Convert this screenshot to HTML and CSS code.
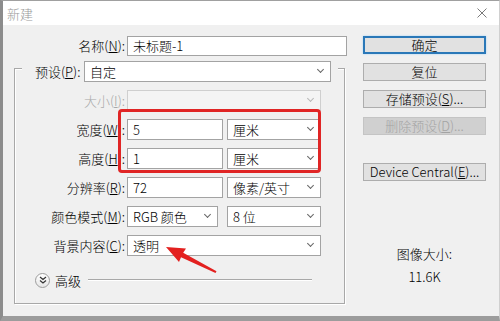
FILE: index.html
```html
<!DOCTYPE html>
<html lang="zh-CN">
<head>
  <meta charset="UTF-8" />
  <title>新建</title>
  <link rel="stylesheet" href="styles.css">
</head>
<body>
  <div class="window">
    <div class="titlebar">
      <span class="title">新建</span>
      <svg class="close" width="10" height="10" viewBox="0 0 10 10" aria-hidden="true">
        <path d="M0.5 0.5 L9.5 9.5 M9.5 0.5 L0.5 9.5" stroke="#7a7a7a" stroke-width="1" fill="none" />
      </svg>
    </div>

    <div class="content">
      <div class="left">
        <div class="name-row">
          <label class="label">名称(<u>N</u>):</label>
          <div class="field name-field">未标题-1</div>
        </div>

        <div class="group">
          <div class="preset-row">
            <label class="preset-label">预设(<u>P</u>):</label>
            <div class="select preset-select">自定<span class="chev"></span></div>
          </div>

          <div class="rows">
            <div class="row disabled">
              <label class="label">大小(<u>I</u>):</label>
              <div class="select wide"><span class="chev"></span></div>
            </div>
            <div class="row">
              <label class="label">宽度(<u>W</u>):</label>
              <div class="field small">5</div>
              <div class="select unit">厘米<span class="chev"></span></div>
            </div>
            <div class="row">
              <label class="label">高度(<u>H</u>):</label>
              <div class="field small">1</div>
              <div class="select unit">厘米<span class="chev"></span></div>
            </div>
            <div class="row">
              <label class="label">分辨率(<u>R</u>):</label>
              <div class="field small">72</div>
              <div class="select unit">像素/英寸<span class="chev"></span></div>
            </div>
            <div class="row">
              <label class="label">颜色模式(<u>M</u>):</label>
              <div class="select mode">RGB 颜色<span class="chev"></span></div>
              <div class="select unit">8 位<span class="chev"></span></div>
            </div>
            <div class="row">
              <label class="label">背景内容(<u>C</u>):</label>
              <div class="select wide">透明<span class="chev"></span></div>
            </div>
          </div>

          <div class="advanced">
            <span class="adv-btn">
              <svg width="8" height="8" viewBox="0 0 8 8" aria-hidden="true">
                <path d="M1 1 L4 3.5 L7 1 M1 4.5 L4 7 L7 4.5" stroke="#333" stroke-width="1.2" fill="none" />
              </svg>
            </span>
            <span class="adv-text">高级</span>
            <span class="adv-line"></span>
          </div>
        </div>
      </div>

      <div class="right">
        <button class="btn default">确定</button>
        <button class="btn">复位</button>
        <button class="btn">存储预设(<u>S</u>)...</button>
        <button class="btn" disabled>删除预设(<u>D</u>)...</button>
        <button class="btn device">Device Central(<u>E</u>)...</button>
        <div class="image-size">
          <p>图像大小:</p>
          <p>11.6K</p>
        </div>
      </div>
    </div>

    <!-- annotations drawn over the dialog -->
    <div class="highlight"></div>
    <svg class="arrow" width="500" height="321" viewBox="0 0 500 321" aria-hidden="true">
      <polygon points="166,247 186,248.5 183.2,252.8 216.5,271.2 215.5,273 181,257.2 179,262" fill="#e3201f" />
    </svg>
  </div>
</body>
</html>
```

FILE: styles.css
```css
* {
  box-sizing: border-box;
  margin: 0;
  padding: 0;
}
body {
  font-family: "Noto Sans CJK SC", "Noto Sans", sans-serif;
  font-size: 13px;
  font-weight: 300;
  color: #000;
  background: #f0f0f0;
}
.window {
  position: relative;
  width: 500px;
  height: 321px;
  display: flex;
  flex-direction: column;
  border-left: 3px solid #8c8c8c;
  border-top: 1px solid #a0a0a0;
  border-right: 1px solid #d0d0d0;
  border-bottom: 5px solid #9c9c9c;
  background: #f0f0f0;
}
/* Title bar */
.titlebar {
  height: 24px;
  background: #fff;
  display: flex;
  align-items: center;
  justify-content: space-between;
  padding: 0 12px 0 4px;
}
.title {
  color: #9a9a9a;
  font-size: 13px;
}
.content {
  flex: 1;
  display: flex;
}
/* Left column */
.left {
  width: 344px;
}
.name-row {
  display: flex;
  margin-top: 11px;
  height: 20px;
}
.label {
  width: 124px;
  padding-right: 2px;
  text-align: right;
  line-height: 20px;
  white-space: nowrap;
}
.field {
  background: #fff;
  border: 1px solid #a3a3a3;
  padding-left: 5px;
  line-height: 18px;
  height: 20px;
}
.name-field {
  width: 220px;
}
.group {
  margin: 12px 0 0 11px;
  width: 331px;
  height: 236px;
  border: 1px solid #a8a8a8;
  box-shadow: 1px 1px 0 #fff, inset 1px 1px 0 #fff;
}
.preset-row {
  display: flex;
  align-items: center;
  margin: -8px 6px 0 7px;
  padding: 0 7px 0 13px;
  background: #f0f0f0;
  height: 21px;
}
.preset-label {
  width: 49px;
  white-space: nowrap;
}
.select {
  position: relative;
  background: #fff;
  border: 1px solid #a3a3a3;
  height: 21px;
  line-height: 19px;
  padding-left: 5px;
  white-space: nowrap;
}
.chev {
  position: absolute;
  right: 7px;
  top: 5px;
  width: 5px;
  height: 5px;
  border-right: 1px solid #666;
  border-bottom: 1px solid #666;
  transform: rotate(45deg);
}
.preset-select {
  width: 247px;
}
.rows {
  display: flex;
  flex-direction: column;
  gap: 8px;
  margin-top: 8px;
}
.row {
  display: flex;
  height: 21px;
}
.row .label {
  width: 112px;
  line-height: 21px;
}
.row .field {
  height: 21px;
  line-height: 19px;
}
.wide {
  width: 194px;
}
.small {
  width: 96px;
}
.unit {
  width: 94px;
  margin-left: 4px;
}
.mode {
  width: 91px;
  margin-right: 9px;
}
.mode + .unit {
  margin-left: 0;
}
.disabled .label {
  color: #a8a8a8;
}
.disabled .select {
  background: #f4f4f4;
  border-color: #cfcfcf;
}
.disabled .chev {
  border-color: #b8b8b8;
}
/* Advanced toggle */
.advanced {
  display: flex;
  align-items: center;
  margin: 17px 32px 0 20px;
  height: 14px;
}
.adv-btn {
  width: 15px;
  height: 15px;
  border-radius: 50%;
  border: 1px solid #9c9c9c;
  background: linear-gradient(#fff, #e6e6e6);
  display: flex;
  align-items: center;
  justify-content: center;
}
.adv-text {
  margin-left: 5px;
}
.adv-line {
  flex: 1;
  margin-left: 7px;
  height: 2px;
  border-top: 1px solid #a8a8a8;
  border-bottom: 1px solid #fff;
}
/* Right column */
.right {
  width: 123px;
  margin-left: 16px;
  padding-top: 11px;
  display: flex;
  flex-direction: column;
}
.btn {
  font-family: inherit;
  font-size: 13px;
  font-weight: 300;
  height: 18px;
  line-height: 16px;
  background: #e1e1e1;
  border: 1px solid #adadad;
  color: #000;
  margin-bottom: 9px;
}
.btn.default {
  border: 2px solid #2a78b8;
  line-height: 14px;
  box-shadow: 0 0 2px #a6d4f5;
}
.btn:disabled {
  background: #d0d0d0;
  border-color: #c4c4c4;
  color: #a3a3a3;
}
.btn.device {
  margin-top: 19px;
}
.image-size {
  margin-top: 56px;
  text-align: center;
  line-height: 16px;
}
.image-size p + p {
  margin-top: 7px;
}
/* Annotations */
.highlight {
  position: absolute;
  left: 115px;
  top: 108px;
  width: 203px;
  height: 64px;
  border: 3px solid #e02525;
  border-radius: 4px;
}
.arrow {
  position: absolute;
  left: -3px;
  top: -1px;
}
```
